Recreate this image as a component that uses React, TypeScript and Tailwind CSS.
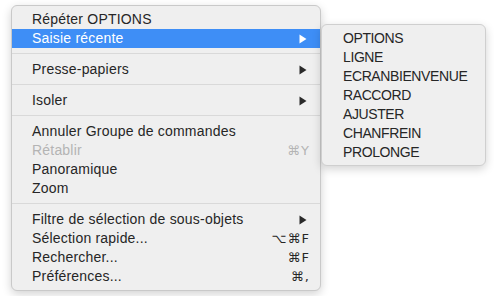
import React from "react";

type Item =
  | { kind: "sep" }
  | {
      kind: "item";
      label: string;
      shortcut?: string;
      submenu?: boolean;
      disabled?: boolean;
      active?: boolean;
    };

const items: Item[] = [
  { kind: "item", label: "Répéter OPTIONS" },
  { kind: "item", label: "Saisie récente", submenu: true, active: true },
  { kind: "sep" },
  { kind: "item", label: "Presse-papiers", submenu: true },
  { kind: "sep" },
  { kind: "item", label: "Isoler", submenu: true },
  { kind: "sep" },
  { kind: "item", label: "Annuler Groupe de commandes" },
  { kind: "item", label: "Rétablir", shortcut: "⌘Y", disabled: true },
  { kind: "item", label: "Panoramique" },
  { kind: "item", label: "Zoom" },
  { kind: "sep" },
  { kind: "item", label: "Filtre de sélection de sous-objets", submenu: true },
  { kind: "item", label: "Sélection rapide...", shortcut: "⌥⌘F" },
  { kind: "item", label: "Rechercher...", shortcut: "⌘F" },
  { kind: "item", label: "Préférences...", shortcut: "⌘," },
];

const recent = [
  "OPTIONS",
  "LIGNE",
  "ECRANBIENVENUE",
  "RACCORD",
  "AJUSTER",
  "CHANFREIN",
  "PROLONGE",
];

function Arrow({ white }: { white?: boolean }) {
  return (
    <svg width="8" height="10" viewBox="0 0 8 10" className="mr-[3px]">
      <polygon points="0.5,0.5 7.5,5 0.5,9.5" fill={white ? "#ffffff" : "#2a2a2a"} />
    </svg>
  );
}

export default function App() {
  return (
    <div
      className="w-[494px] h-[296px] bg-white overflow-hidden pt-[5px] pl-[11px]"
      style={{ fontFamily: '"Liberation Sans", Arial, sans-serif' }}
    >
      <div className="relative w-[310px] rounded-[6px] border border-[#c9c9c9] bg-[#efefef] pt-[4px] pb-[4px] shadow-[0_3px_10px_rgba(0,0,0,0.18)]">
        {items.map((it, i) =>
          it.kind === "sep" ? (
            <div key={i} className="h-[12px] pt-[5px]">
              <div className="h-px bg-[#d9d9d9]" />
            </div>
          ) : (
            <div
              key={i}
              className={
                "h-[19px] flex items-center justify-between pl-[20px] pr-[10px] text-[14px] tracking-[0.2px] " +
                (it.active
                  ? "bg-[#3e8ef6] text-white"
                  : it.disabled
                  ? "text-[#b4b4b4]"
                  : "text-[#262626]")
              }
            >
              <span>{it.label}</span>
              {it.submenu ? (
                <Arrow white={it.active} />
              ) : it.shortcut ? (
                <span
                  className="tracking-[1px]"
                  style={{ fontFamily: '"DejaVu Sans", "Liberation Sans", sans-serif', fontSize: 13 }}
                >
                  {it.shortcut}
                </span>
              ) : null}
            </div>
          )
        )}

        <div className="absolute left-[309px] top-[18px] w-[165px] rounded-[6px] border border-[#cfcfcf] bg-[#efefef] pt-[4px] pb-[3px] shadow-[0_3px_10px_rgba(0,0,0,0.18)]">
          {recent.map((r) => (
            <div
              key={r}
              className="h-[19px] flex items-center pl-[21px] text-[14px] tracking-[-0.4px] text-[#262626]"
            >
              {r}
            </div>
          ))}
        </div>
      </div>
    </div>
  );
}
